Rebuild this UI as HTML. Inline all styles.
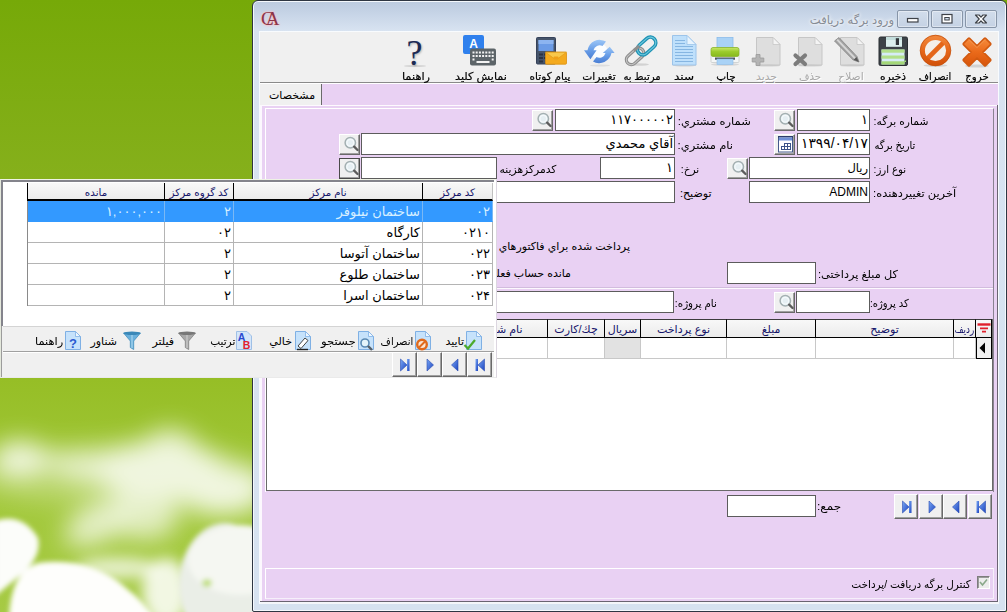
<!DOCTYPE html>
<html lang="fa">
<head>
<meta charset="utf-8">
<title>ورود برگه دريافت</title>
<style>
*{box-sizing:border-box;margin:0;padding:0}
html,body{width:1007px;height:612px;overflow:hidden;background:#86b01c}
body{position:relative;font-family:"Liberation Sans","DejaVu Sans",sans-serif;font-size:11px;color:#000}
.abs{position:absolute}
#bg{position:absolute;left:0;top:0;width:1007px;height:612px}
#win{position:absolute;left:252px;top:0;width:755px;height:612px;border:1px solid #2e3642;border-radius:6px 6px 2px 2px;background:linear-gradient(#bccbdf 0,#c4d2e5 10px,#d8e3f1 30px,#d6e2f0 100%);box-shadow:inset 0 0 0 1px #f4f8fc}
#client{position:absolute;left:259px;top:31px;width:740px;height:573px;background:#e9d1f3;border:1px solid #f8fbfe}
.lbl{position:absolute;white-space:nowrap;direction:rtl;text-align:right;height:21px;line-height:21px;padding-top:1px}
.inp{position:absolute;height:21px;background:#fff;border:1px solid #5c5c5c;font-size:13px;line-height:20px;direction:rtl;text-align:right;padding-right:1px;white-space:nowrap;overflow:hidden}
.sbtn{position:absolute;width:21px;height:21px;background:#f0f0f0;border:1px solid;border-color:#fff #696969 #696969 #fff;box-shadow:inset -1px -1px 0 #a0a0a0}
.sbtn svg{position:absolute;left:2px;top:1px}
.tb{position:absolute;top:66.5px;-webkit-text-stroke:.18px #000;height:18px;line-height:18px;font-size:10.5px;white-space:nowrap;direction:rtl;text-align:center}
.tb.dis{-webkit-text-stroke:0;color:#a8a8a8;text-shadow:1px 1px 0 #fff}
.ico{position:absolute}
.gh{position:absolute;top:0;height:18px;line-height:17px;background:linear-gradient(#f8f8f8,#ebebeb);border-right:1px solid #000;border-bottom:2px solid #000;border-top:1px solid #3c3c3c;text-align:center;color:#14146a;direction:rtl;white-space:nowrap;overflow:hidden}
.nav{position:absolute;width:24px;height:25px;background:#f0f0f0;border:1px solid;border-color:#fff #696969 #696969 #fff;box-shadow:inset -1px -1px 0 #a0a0a0}
.nav svg{position:absolute;left:4px;top:4px}
.pt{position:absolute;top:331px;height:20px;line-height:20px;white-space:nowrap;direction:rtl}
.cap{top:10px;width:32px;height:18px;border:1px solid #8795a8;border-radius:2px;background:linear-gradient(#d2ddeb,#c5d2e4);box-shadow:inset 0 0 0 1px rgba(255,255,255,.4)}
.cap svg{position:absolute;left:0;top:0}
</style>
</head>
<body>
<svg id="bg" viewBox="0 0 1007 612" width="1007" height="612">
<defs>
<linearGradient id="gbg" x1="0" y1="0" x2="0" y2="1">
<stop offset="0" stop-color="#76a908"/>
<stop offset="0.3" stop-color="#86b01c"/>
<stop offset="0.62" stop-color="#96be26"/>
<stop offset="0.8" stop-color="#a2c83a"/>
<stop offset="1" stop-color="#a6ca44"/>
</linearGradient>
<filter id="b20" x="-50%" y="-50%" width="200%" height="200%"><feGaussianBlur stdDeviation="12"/></filter>
<filter id="b8" x="-50%" y="-50%" width="200%" height="200%"><feGaussianBlur stdDeviation="7"/></filter>
<filter id="b3" x="-50%" y="-50%" width="200%" height="200%"><feGaussianBlur stdDeviation="2.5"/></filter>
<linearGradient id="gn" x1="0" y1="0" x2="1" y2="1"><stop offset="0" stop-color="#7aa8f4"/><stop offset="1" stop-color="#1c44c0"/></linearGradient>
</defs>
<rect width="1007" height="612" fill="url(#gbg)"/>
<g filter="url(#b20)" fill="#fff" opacity=".84">
<ellipse cx="120" cy="475" rx="150" ry="32" opacity=".3"/>
<ellipse cx="160" cy="471" rx="66" ry="30" opacity="1"/>
<ellipse cx="170" cy="446" rx="26" ry="17" opacity=".85"/>
<ellipse cx="222" cy="490" rx="46" ry="25" opacity="1"/>
<ellipse cx="100" cy="467" rx="45" ry="16" opacity=".8"/>
<ellipse cx="98" cy="524" rx="36" ry="19" opacity=".85" transform="rotate(-25 98 524)"/>
<ellipse cx="145" cy="515" rx="34" ry="25" opacity=".8"/>
<ellipse cx="20" cy="459" rx="28" ry="18" opacity="1"/>
<ellipse cx="58" cy="462" rx="28" ry="10" opacity=".6"/>
</g>
<g filter="url(#b8)" fill="#fff">
<ellipse cx="166" cy="592" rx="24" ry="34" opacity=".85"/>
<ellipse cx="118" cy="568" rx="42" ry="11" opacity=".7"/>
</g>
<g filter="url(#b3)">
<path d="M-5 521 Q 22 512 38 538 Q 42 556 22 574 L-5 596 Z" fill="#fcfdfa"/>
<ellipse cx="225" cy="585" rx="46" ry="62" fill="#eaeee7"/>
<ellipse cx="240" cy="560" rx="52" ry="35" fill="#f5f7f2"/>
<ellipse cx="207" cy="583" rx="5" ry="4" fill="#b4d860" opacity=".8"/>
<path d="M9 620 Q 10 572 38 563 Q 90 556 126 588 Q 142 600 156 620 Z" fill="#fefefc"/>
</g>
</svg>
<div id="win"></div>
<div class="abs" style="left:261px;top:8px;width:20px;height:22px;font-family:'Liberation Serif',serif;font-size:19px;line-height:22px;color:#8c3448;letter-spacing:-8px;text-shadow:0 0 2px #f6b8c0,0 0 3px #f8c8d0">CA</div>
<div class="abs" style="left:760px;top:10px;width:134px;height:20px;line-height:20px;font-size:11.6px;color:#868c95;direction:rtl;text-align:right;text-shadow:0 0 3px #fff,0 0 5px #fff">ورود برگه دريافت</div>
<div class="abs cap" style="left:897px"><svg width="31" height="17" viewBox="0 0 31 17"><rect x="9.500" y="7.500" width="10.500" height="3.500" fill="#fff" stroke="#3e4248" stroke-width="1.200"/></svg></div>
<div class="abs cap" style="left:931px"><svg width="31" height="17" viewBox="0 0 31 17"><rect x="10" y="3.500" width="10" height="8.500" fill="#fff" stroke="#3e4248" stroke-width="1.200"/><rect x="12.800" y="6.500" width="4.400" height="2.500" fill="#cfdcec" stroke="#3e4248" stroke-width="1"/></svg></div>
<div class="abs cap" style="left:965px"><svg width="31" height="17" viewBox="0 0 31 17"><path d="M9.500 4h3.500l2 2.200 2-2.200h3.500l-3.700 4 3.700 4h-3.500l-2-2.200-2 2.200h-3.500l3.700-4z" fill="#fff" stroke="#3e4248" stroke-width="1.200" stroke-linejoin="round"/></svg></div>
<div id="client"></div>
<div class="abs" style="left:260px;top:32px;width:738px;height:50px;background:#f0f0f0"></div>
<div class="abs" style="left:260px;top:82px;width:738px;height:1px;background:#8a8a8a"></div>
<!-- toolbar icons -->
<svg class="ico" style="left:961px;top:36px" width="32" height="32" viewBox="0 0 32 32">
<defs><linearGradient id="gx" x1="0" y1="0" x2="0" y2="1"><stop offset="0" stop-color="#f58a3c"/><stop offset=".5" stop-color="#ea6a1a"/><stop offset="1" stop-color="#d9560c"/></linearGradient></defs>
<ellipse cx="16" cy="30" rx="12" ry="1.600" fill="#000" opacity=".12"/>
<path d="M8 3 L16 11 L24 3 L29 8 L21 16 L29 24 L24 29 L16 21 L8 29 L3 24 L11 16 L3 8 Z" fill="url(#gx)" stroke="#d25a10" stroke-width="3.200" stroke-linejoin="round"/><path d="M8 3 L16 11 L24 3 L29 8 L21 16 L29 24 L24 29 L16 21 L8 29 L3 24 L11 16 L3 8 Z" fill="url(#gx)"/>
<path d="M8 3.500 L16 11.500 L24 3.500" fill="none" stroke="#f9a560" stroke-width="1" opacity=".7"/>
</svg>
<svg class="ico" style="left:919px;top:34px" width="33" height="33" viewBox="0 0 33 33">
<defs><linearGradient id="gc" x1="0" y1="0" x2="0" y2="1"><stop offset="0" stop-color="#f08438"/><stop offset=".5" stop-color="#e6671a"/><stop offset="1" stop-color="#d4540c"/></linearGradient></defs>
<ellipse cx="16.500" cy="31.500" rx="12" ry="1.500" fill="#000" opacity=".12"/>
<circle cx="16.500" cy="16.500" r="11" fill="#f3eee9"/>
<path d="M8.500 24.500 L24.500 8.500" stroke="#e4661a" stroke-width="4.600"/>
<circle cx="16.500" cy="16.500" r="13" fill="none" stroke="url(#gc)" stroke-width="4.800"/>
<circle cx="16.500" cy="16.500" r="15.300" fill="none" stroke="#c4500e" stroke-width=".8"/>
</svg>
<svg class="ico" style="left:878px;top:36px" width="30" height="31" viewBox="0 0 30 31">
<rect x="1" y="1" width="28.500" height="28.500" rx="1.500" fill="#3d4248" stroke="#2a2e33" stroke-width="1"/>
<rect x="8" y="1" width="16" height="9.800" fill="#dcefee"/>
<rect x="8" y="1" width="16" height="3" fill="#c4dedd"/>
<rect x="17.800" y="2.200" width="3.200" height="6.800" fill="#33373c"/>
<rect x="3.500" y="13.500" width="23" height="15" fill="#d6ecf6"/>
<rect x="3.500" y="13.500" width="23" height="3.200" fill="#b2e08a"/>
<rect x="3.500" y="19.500" width="23" height="3.200" fill="#b2e08a"/>
<rect x="3.500" y="25.300" width="23" height="3.200" fill="#a4d878"/>
<rect x="26.500" y="24.500" width="1.500" height="1.500" fill="#9fe070"/>
</svg>
<div class="tb " style="left:937.4px;width:80px;font-size:10.8px;transform:scaleX(0.944)">خروج</div>
<div class="tb " style="left:895.2px;width:80px;font-size:10.8px;transform:scaleX(0.917)">انصراف</div>
<div class="tb " style="left:853.0px;width:80px;font-size:10.8px;transform:scaleX(0.991)">ذخيره</div>
<div class="tb dis" style="left:811.2px;width:80px;font-size:10.8px;transform:scaleX(0.991)">اصلاح</div>
<div class="tb dis" style="left:769.7px;width:80px;font-size:10.8px;transform:scaleX(0.944)">حذف</div>
<div class="tb dis" style="left:726.5px;width:80px;font-size:10.8px;transform:scaleX(1.000)">جديد</div>
<div class="tb " style="left:685.7px;width:80px;font-size:10.8px;transform:scaleX(0.972)">چاپ</div>
<div class="tb " style="left:644.3px;width:80px;font-size:10.8px;transform:scaleX(1.111)">سند</div>
<div class="tb " style="left:601.5px;width:80px;font-size:10.8px;transform:scaleX(0.926)">مرتبط به</div>
<div class="tb " style="left:558.8px;width:80px;font-size:10.8px;transform:scaleX(0.991)">تغييرات</div>
<div class="tb " style="left:510.4px;width:80px;font-size:10.8px;transform:scaleX(0.972)">پيام كوتاه</div>
<div class="tb " style="left:441.0px;width:80px;font-size:10.8px;transform:scaleX(1.037)">نمايش كليد</div>
<div class="tb " style="left:376.2px;width:80px;font-size:10.8px;transform:scaleX(1.056)">راهنما</div>
<!-- edit (disabled) -->
<svg class="ico" style="left:833px;top:36px" width="34" height="31" viewBox="0 0 34 31">
<path d="M7.500 1.500 H24 L31 8.500 V29 H7.500 Z" fill="#dedede" stroke="#c6c6c6" stroke-width="1"/>
<path d="M24 1.500 V8.500 H31 Z" fill="#f4f4f4" stroke="#c6c6c6" stroke-width=".8"/>
<ellipse cx="19" cy="29.800" rx="12" ry="1" fill="#000" opacity=".08"/>
<path d="M1.500 5 L6 1.500 L24 20.500 L26 26 L20.200 24 Z" fill="#a2a2a2" stroke="#858585" stroke-width=".8"/>
<path d="M4.200 3.600 L22.300 22.600" stroke="#d6d6d6" stroke-width="2"/>
<path d="M23.500 21 L25.800 26 L20.600 23.700 Z" fill="#5a5a5a"/>
</svg>
<!-- delete (disabled) -->
<svg class="ico" style="left:791px;top:36px" width="34" height="31" viewBox="0 0 34 31">
<path d="M7.500 1.500 H24 L31 8.500 V29 H7.500 Z" fill="#dedede" stroke="#c6c6c6" stroke-width="1"/>
<path d="M24 1.500 V8.500 H31 Z" fill="#f4f4f4" stroke="#c6c6c6" stroke-width=".8"/>
<ellipse cx="19" cy="29.800" rx="12" ry="1" fill="#000" opacity=".08"/>
<path d="M4.500 19.500 L14 28 M14 19.500 L4.500 28" stroke="#7c7c7c" stroke-width="4.200" stroke-linecap="round"/>
</svg>
<!-- new (disabled) -->
<svg class="ico" style="left:749px;top:36px" width="34" height="31" viewBox="0 0 34 31">
<path d="M7.500 1.500 H24 L31 8.500 V29 H7.500 Z" fill="#dedede" stroke="#c6c6c6" stroke-width="1"/>
<path d="M24 1.500 V8.500 H31 Z" fill="#f4f4f4" stroke="#c6c6c6" stroke-width=".8"/>
<ellipse cx="19" cy="29.800" rx="12" ry="1" fill="#000" opacity=".08"/>
<path d="M7 18.500 H11 V22 H14.800 V26 H11 V29.500 H7 V26 H3.200 V22 H7 Z" fill="#b4b4b4" stroke="#9a9a9a" stroke-width=".8"/>
</svg>
<!-- print -->
<svg class="ico" style="left:709px;top:36px" width="32" height="31" viewBox="0 0 32 31">
<defs><linearGradient id="gp" x1="0" y1="0" x2="0" y2="1"><stop offset="0" stop-color="#c8e86a"/><stop offset=".45" stop-color="#9ccc2c"/><stop offset="1" stop-color="#86b81c"/></linearGradient></defs>
<ellipse cx="16" cy="28.500" rx="14" ry="1.500" fill="#000" opacity=".1"/>
<rect x="8" y="1.500" width="16" height="11" fill="#a9d2f6" stroke="#8cbcea" stroke-width=".8"/>
<rect x="2" y="19" width="28" height="7.500" rx="1" fill="#f4f6f6" stroke="#c8cccc" stroke-width=".8"/>
<rect x="2" y="11.500" width="28" height="9" rx="2" fill="url(#gp)" stroke="#88b428" stroke-width=".8"/>
<rect x="6" y="21.500" width="20" height="2.200" fill="#4a5258"/>
<rect x="8" y="23" width="16" height="5.500" fill="#a9d2f6" stroke="#8cbcea" stroke-width=".6"/>
</svg>
<!-- document -->
<svg class="ico" style="left:671px;top:34px" width="27" height="33" viewBox="0 0 27 33">
<ellipse cx="13.500" cy="31.300" rx="12" ry="1.200" fill="#000" opacity=".12"/>
<path d="M1.500 1.500 H16 L25 10.500 V31 H1.500 Z" fill="#bfe0fb" stroke="#9cc4ea" stroke-width="1"/>
<path d="M16 1.500 V10.500 H25 Z" fill="#e8f4fe" stroke="#9cc4ea" stroke-width=".8"/>
<g stroke="#86b6e2" stroke-width="1"><path d="M4 6.500H14M4 9.500H14M4 12.500H22M4 15.500H22M4 18.500H22M4 21.500H22M4 24.500H22M4 27.500H22"/></g>
</svg>
<!-- link -->
<svg class="ico" style="left:624px;top:35px" width="34" height="32" viewBox="0 0 34 32">
<ellipse cx="14" cy="29.500" rx="11" ry="1.300" fill="#000" opacity=".12"/>
<g transform="rotate(-42 17 16)">
<rect x="-1" y="11" width="20" height="10" rx="5" fill="none" stroke="#8e8e8e" stroke-width="3.200"/>
<rect x="-1" y="11" width="20" height="10" rx="5" fill="none" stroke="#c4c4c4" stroke-width="1"/>
<rect x="14" y="10.500" width="21" height="11" rx="5.500" fill="none" stroke="#1f92b4" stroke-width="3.600"/>
<rect x="14" y="10.500" width="21" height="11" rx="5.500" fill="none" stroke="#6cc8de" stroke-width="1.100"/>
<path d="M12 11 H19" stroke="#8e8e8e" stroke-width="3.200"/>
</g>
</svg>
<!-- refresh -->
<svg class="ico" style="left:583px;top:36px" width="33" height="31" viewBox="0 0 33 31">
<defs><linearGradient id="gr" x1="0" y1="0" x2="0" y2="1"><stop offset="0" stop-color="#9cc6f6"/><stop offset=".5" stop-color="#6a9fe8"/><stop offset="1" stop-color="#4a7ed4"/></linearGradient></defs>
<ellipse cx="17" cy="29.500" rx="10" ry="1.100" fill="#000" opacity=".08"/>
<ellipse cx="16.500" cy="15.500" rx="8" ry="8" fill="#fbfdff"/>
<path d="M23 5.500 A12.500 12.500 0 0 0 4.500 14.300 L1 14.300 L7.400 23.300 L13.600 14.300 L10.500 14.300 A6.300 6.300 0 0 1 19.500 10 Z" fill="url(#gr)"/>
<path d="M10 25.500 A12.500 12.500 0 0 0 28.500 17 L31.600 17 L26.700 10.800 L19.800 17 L22.500 17 A6.300 6.300 0 0 1 13.500 21 Z" fill="url(#gr)"/>
</svg>
<!-- sms -->
<svg class="ico" style="left:535px;top:36px" width="34" height="30" viewBox="0 0 34 30">
<rect x="1.500" y="1.500" width="19" height="26.500" rx="1" fill="#46546a" stroke="#36425a" stroke-width="1"/>
<rect x="3.500" y="4" width="15" height="11" fill="#6b9be6"/>
<rect x="3.500" y="4" width="15" height="4" fill="#8cb4f0"/>
<g fill="#2c3444"><rect x="4" y="17.500" width="4" height="2"/><rect x="9" y="17.500" width="4" height="2"/><rect x="14" y="17.500" width="4" height="2"/><rect x="4" y="21" width="4" height="2"/><rect x="9" y="21" width="4" height="2"/><rect x="4" y="24.500" width="4" height="2"/></g>
<rect x="10.500" y="16.200" width="21" height="12" rx="1" fill="#f4aa1e" stroke="#dc9010" stroke-width=".8"/>
<path d="M10.500 16.200 L21 24 L31.500 16.200 Z" fill="#f9c84a" stroke="#e09a18" stroke-width=".7"/>
<rect x="18.500" y="20.500" width="5" height="2.500" rx="1" fill="#f0a018"/>
</svg>
<!-- keyboard -->
<svg class="ico" style="left:462px;top:34px" width="36" height="33" viewBox="0 0 36 33">
<path d="M3 1 H20 A2 2 0 0 1 22 3 V22.500 L17.500 20 H3 A2 2 0 0 1 1 18 V3 A2 2 0 0 1 3 1 Z" fill="#2f80ed"/>
<rect x="8" y="14.500" width="26" height="17" rx="2" fill="#5c6468"/>
<g fill="#f2f2f2"><rect x="10.500" y="17.500" width="2" height="2"/><rect x="13.700" y="17.500" width="2" height="2"/><rect x="16.900" y="17.500" width="2" height="2"/><rect x="20.100" y="17.500" width="2" height="2"/><rect x="23.300" y="17.500" width="2" height="2"/><rect x="26.500" y="17.500" width="2" height="2"/><rect x="29.700" y="17.500" width="2" height="2"/>
<rect x="10.500" y="21" width="2" height="2"/><rect x="13.700" y="21" width="2" height="2"/><rect x="16.900" y="21" width="2" height="2"/><rect x="20.100" y="21" width="2" height="2"/><rect x="23.300" y="21" width="2" height="2"/><rect x="26.500" y="21" width="2" height="2"/><rect x="29.700" y="21" width="2" height="2"/>
<rect x="10.500" y="24.500" width="2" height="2"/><rect x="29.700" y="24.500" width="2" height="2"/><rect x="14.500" y="27" width="13" height="2"/></g>
<text x="11.500" y="13.800" font-family="Liberation Sans, sans-serif" font-weight="bold" font-size="12" fill="#fff" text-anchor="middle">A</text>
</svg>
<!-- help -->
<div class="abs" style="left:402.5px;top:35px;width:24px;height:36px;line-height:36px;text-align:center;font-family:'Liberation Serif',serif;font-size:36px;color:#1c2a54;text-shadow:1px 1px 2px rgba(0,0,0,.25)">?</div>
<div class="abs" style="left:404px;top:65px;width:22px;height:2px;border-radius:50%;background:rgba(0,0,0,.12)"></div>
<div class="abs" style="left:260px;top:83px;width:62px;height:22px;background:#f0f0f0;border-right:1px solid #6a6a6a"></div>
<div class="abs" style="left:321px;top:83px;width:1px;height:22px;background:#6a6a6a"></div>
<div class="lbl" style="left:262px;top:84px;width:60px;height:20px;line-height:20px;text-align:center">مشخصات</div>
<div class="abs" style="left:260px;top:104.5px;width:738px;height:1.5px;background:#fdfafe"></div>
<div class="abs" style="left:260px;top:83px;width:738px;height:1px;background:#fff"></div>
<div class="abs" style="left:997px;top:105px;width:1px;height:497px;background:#6a6472"></div>
<div class="abs" style="left:260px;top:105px;width:2px;height:497px;background:#fcf8fe"></div>
<div class="abs" style="left:265px;top:108px;width:729px;height:384px;border-top:1px solid #fff;border-left:1px solid #fff;border-right:1px solid #8a8292"></div>
<div class="abs" style="left:266px;top:288px;width:727px;height:1px;background:#fdf9fe"></div>
<div class="abs" style="left:266px;top:287px;width:727px;height:1px;background:#d2bcde"></div>
<div class="lbl" style="right:79.0px;top:110px;height:21px;line-height:21px;transform:scaleX(0.973);transform-origin:100% 50%">شماره برگه:</div>
<div class="inp" style="left:797px;top:109px;width:73px;height:22px;">۱</div>
<div class="sbtn" style="left:774px;top:110px"><svg width="17" height="17" viewBox="0 0 17 17"><circle cx="8.300" cy="6.700" r="5.200" fill="#e6eff3" stroke="#a4b0b2" stroke-width="1.500"/><circle cx="8.300" cy="6.700" r="3.300" fill="none" stroke="#f4f9fb" stroke-width="1.200"/><path d="M12.200 10.600 L15.500 14" stroke="#5c5c5c" stroke-width="2.300" stroke-linecap="round"/></svg></div>
<div class="lbl" style="right:92.0px;top:134px;height:21px;line-height:21px;transform:scaleX(0.900);transform-origin:100% 50%">تاريخ برگه</div>
<div class="inp" style="left:797px;top:133px;width:73px;height:22px;font-size:13.8px;">۱۳۹۹/۰۴/۱۷</div>
<div class="sbtn" style="left:774px;top:134px"><svg width="17" height="17" viewBox="0 0 17 17"><rect x="1.500" y=".5" width="14" height="15.500" fill="#fff" stroke="#44598c" stroke-width="1"/><rect x="1" y="0" width="15" height="1.500" fill="#2c3c6c"/><rect x="2" y="1.500" width="13" height="3" fill="#6f90d8"/><g fill="none" stroke="#3c5288" stroke-width="1"><rect x="7.500" y="7.500" width="3" height="3"/><rect x="10.500" y="7.500" width="3" height="3"/><rect x="4.500" y="10.500" width="3" height="3"/><rect x="7.500" y="10.500" width="3" height="3"/><rect x="10.500" y="10.500" width="3" height="3"/></g></svg></div>
<div class="lbl" style="right:101.0px;top:158px;height:21px;line-height:21px;transform:scaleX(0.927);transform-origin:100% 50%">نوع ارز:</div>
<div class="inp" style="left:749px;top:157px;width:121px;height:22px;font-size:11.5px;">ريال</div>
<div class="sbtn" style="left:727px;top:158px"><svg width="17" height="17" viewBox="0 0 17 17"><circle cx="8.300" cy="6.700" r="5.200" fill="#e6eff3" stroke="#a4b0b2" stroke-width="1.500"/><circle cx="8.300" cy="6.700" r="3.300" fill="none" stroke="#f4f9fb" stroke-width="1.200"/><path d="M12.200 10.600 L15.500 14" stroke="#5c5c5c" stroke-width="2.300" stroke-linecap="round"/></svg></div>
<div class="lbl" style="right:51.0px;top:182px;height:21px;line-height:21px;transform:scaleX(1.036);transform-origin:100% 50%">آخرين تغييردهنده:</div>
<div class="inp" style="left:749px;top:181px;width:121px;height:22px;font-size:12px;">ADMIN</div>
<div class="lbl" style="right:256.0px;top:110px;height:21px;line-height:21px;transform:scaleX(1.045);transform-origin:100% 50%">شماره مشتري:</div>
<div class="inp" style="left:555px;top:109px;width:120px;height:22px;">۱۱۷۰۰۰۰۰۲</div>
<div class="sbtn" style="left:532px;top:110px"><svg width="17" height="17" viewBox="0 0 17 17"><circle cx="8.300" cy="6.700" r="5.200" fill="#e6eff3" stroke="#a4b0b2" stroke-width="1.500"/><circle cx="8.300" cy="6.700" r="3.300" fill="none" stroke="#f4f9fb" stroke-width="1.200"/><path d="M12.200 10.600 L15.500 14" stroke="#5c5c5c" stroke-width="2.300" stroke-linecap="round"/></svg></div>
<div class="lbl" style="right:273.5px;top:134px;height:21px;line-height:21px;transform:scaleX(1.045);transform-origin:100% 50%">نام مشتري:</div>
<div class="inp" style="left:361px;top:133px;width:314px;height:22px;">آقاي محمدي</div>
<div class="sbtn" style="left:339px;top:134px"><svg width="17" height="17" viewBox="0 0 17 17"><circle cx="8.300" cy="6.700" r="5.200" fill="#e6eff3" stroke="#a4b0b2" stroke-width="1.500"/><circle cx="8.300" cy="6.700" r="3.300" fill="none" stroke="#f4f9fb" stroke-width="1.200"/><path d="M12.200 10.600 L15.500 14" stroke="#5c5c5c" stroke-width="2.300" stroke-linecap="round"/></svg></div>
<div class="lbl" style="right:307.5px;top:158px;height:21px;line-height:21px;transform:scaleX(0.955);transform-origin:100% 50%">نرخ:</div>
<div class="inp" style="left:600px;top:157px;width:75px;height:22px;">۱</div>
<div class="lbl" style="right:451.0px;top:158px;height:21px;line-height:21px;transform:scaleX(0.973);transform-origin:100% 50%">كدمركزهزينه</div>
<div class="inp" style="left:361px;top:157px;width:136px;height:22px;"></div>
<div class="sbtn" style="left:339px;top:158px"><svg width="17" height="17" viewBox="0 0 17 17"><circle cx="8.300" cy="6.700" r="5.200" fill="#e6eff3" stroke="#a4b0b2" stroke-width="1.500"/><circle cx="8.300" cy="6.700" r="3.300" fill="none" stroke="#f4f9fb" stroke-width="1.200"/><path d="M12.200 10.600 L15.500 14" stroke="#5c5c5c" stroke-width="2.300" stroke-linecap="round"/></svg></div>
<div class="abs" style="left:339px;top:158px;width:21px;height:21px;border:1px solid #4a4a4a"></div>
<div class="lbl" style="right:295.5px;top:182px;height:21px;line-height:21px">توضيح:</div>
<div class="inp" style="left:361px;top:181px;width:314px;height:22px;"></div>
<div class="lbl" style="right:377.0px;top:235px;height:21px;line-height:21px">پرداخت شده براي فاكتورهاي</div>
<div class="lbl" style="right:109.0px;top:263px;height:21px;line-height:21px;transform:scaleX(1.027);transform-origin:100% 50%">كل مبلغ پرداختی:</div>
<div class="inp" style="left:727px;top:262px;width:89px;height:22px;"></div>
<div class="lbl" style="right:436.0px;top:262px;height:21px;line-height:21px">مانده حساب فعلي</div>
<div class="lbl" style="right:98.0px;top:292px;height:21px;line-height:21px;transform:scaleX(0.909);transform-origin:100% 50%">كد پروژه:</div>
<div class="inp" style="left:796px;top:291px;width:74px;height:22px;"></div>
<div class="sbtn" style="left:774px;top:292px"><svg width="17" height="17" viewBox="0 0 17 17"><circle cx="8.300" cy="6.700" r="5.200" fill="#e6eff3" stroke="#a4b0b2" stroke-width="1.500"/><circle cx="8.300" cy="6.700" r="3.300" fill="none" stroke="#f4f9fb" stroke-width="1.200"/><path d="M12.200 10.600 L15.500 14" stroke="#5c5c5c" stroke-width="2.300" stroke-linecap="round"/></svg></div>
<div class="lbl" style="right:290.0px;top:292px;height:21px;line-height:21px;transform:scaleX(0.936);transform-origin:100% 50%">نام پروژه:</div>
<div class="inp" style="left:361px;top:291px;width:313px;height:22px;"></div>
<div class="abs" style="left:266px;top:319px;width:727px;height:172px;background:#fff;border:1px solid #6a6a6a;border-top:none"></div>
<div class="gh" style="left:976px;top:319px;width:16px;height:19px;line-height:19px;border-bottom-width:1.5px"></div>
<div class="abs" style="left:976px;top:338px;width:16px;height:21px;background:#fff;border-right:1px solid #c8c8c8;border-bottom:1px solid #c8c8c8"></div>
<div class="gh" style="left:954px;top:319px;width:22px;height:19px;line-height:19px;border-bottom-width:1.5px"><span style="display:inline-block;transform:scaleX(.8);transform-origin:50% 50%;margin:0 -3px">رديف</span></div>
<div class="abs" style="left:954px;top:338px;width:22px;height:21px;background:#fff;border-right:1px solid #c8c8c8;border-bottom:1px solid #c8c8c8"></div>
<div class="gh" style="left:816px;top:319px;width:138px;height:19px;line-height:19px;border-bottom-width:1.5px">توضيح</div>
<div class="abs" style="left:816px;top:338px;width:138px;height:21px;background:#fff;border-right:1px solid #c8c8c8;border-bottom:1px solid #c8c8c8"></div>
<div class="gh" style="left:727px;top:319px;width:89px;height:19px;line-height:19px;border-bottom-width:1.5px">مبلغ</div>
<div class="abs" style="left:727px;top:338px;width:89px;height:21px;background:#fff;border-right:1px solid #c8c8c8;border-bottom:1px solid #c8c8c8"></div>
<div class="gh" style="left:641px;top:319px;width:86px;height:19px;line-height:19px;border-bottom-width:1.5px">نوع پرداخت</div>
<div class="abs" style="left:641px;top:338px;width:86px;height:21px;background:#fff;border-right:1px solid #c8c8c8;border-bottom:1px solid #c8c8c8"></div>
<div class="gh" style="left:605px;top:319px;width:36px;height:19px;line-height:19px;border-bottom-width:1.5px">سريال</div>
<div class="abs" style="left:605px;top:338px;width:36px;height:21px;background:#e2e2e2;border-right:1px solid #c8c8c8;border-bottom:1px solid #c8c8c8"></div>
<div class="gh" style="left:548px;top:319px;width:57px;height:19px;line-height:19px;border-bottom-width:1.5px">چك/كارت</div>
<div class="abs" style="left:548px;top:338px;width:57px;height:21px;background:#fff;border-right:1px solid #c8c8c8;border-bottom:1px solid #c8c8c8"></div>
<div class="gh" style="left:458px;top:319px;width:90px;height:19px;line-height:19px;border-bottom-width:1.5px">نام شعبه</div>
<div class="abs" style="left:458px;top:338px;width:90px;height:21px;background:#fff;border-right:1px solid #c8c8c8;border-bottom:1px solid #c8c8c8"></div>
<div class="gh" style="left:267px;top:319px;width:191px;height:19px;border-bottom-width:1.5px"></div>
<div class="abs" style="left:267px;top:338px;width:191px;height:21px;border-right:1px solid #c8c8c8;border-bottom:1px solid #c8c8c8"></div>
<svg class="abs" style="left:977px;top:321px" width="14" height="14" viewBox="0 0 14 14"><path d="M.5 3.500H13.500" stroke="#e0202c" stroke-width="2.400"/><path d="M3 7.300H11M5 10.700H9" stroke="#e0202c" stroke-width="1.800"/></svg>
<div class="abs" style="left:976px;top:338px;width:16px;height:21px;background:#f0f0f0;border-right:1px solid #000;border-bottom:1px solid #000;border-left:1px solid #000"></div>
<svg class="abs" style="left:978px;top:341px" width="10" height="14" viewBox="0 0 10 14"><path d="M7 1.500 L1.500 7 L7 12.500 Z" fill="#000"/></svg>
<div class="nav" style="left:968px;top:494px"><svg width="16" height="16" viewBox="0 0 16 16"><rect x="3.500" y="2" width="2.500" height="12" fill="url(#gn)"/><path d="M12.500 2 L6 8 L12.500 14 Z" fill="url(#gn)" stroke="#2a4cb0" stroke-width=".6"/></svg></div>
<div class="nav" style="left:943px;top:494px"><svg width="16" height="16" viewBox="0 0 16 16"><path d="M11 2 L4.500 8 L11 14 Z" fill="url(#gn)" stroke="#2a4cb0" stroke-width=".6"/></svg></div>
<div class="nav" style="left:919px;top:494px"><svg width="16" height="16" viewBox="0 0 16 16"><path d="M5 2 L11.500 8 L5 14 Z" fill="url(#gn)" stroke="#2a4cb0" stroke-width=".6"/></svg></div>
<div class="nav" style="left:894px;top:494px"><svg width="16" height="16" viewBox="0 0 16 16"><rect x="10" y="2" width="2.500" height="12" fill="url(#gn)"/><path d="M3.500 2 L10 8 L3.500 14 Z" fill="url(#gn)" stroke="#2a4cb0" stroke-width=".6"/></svg></div>
<div class="lbl" style="right:166px;top:495px;transform:scaleX(1.09);transform-origin:100% 50%">جمع:</div>
<div class="inp" style="left:727px;top:495px;width:89px;height:22px"></div>
<div class="abs" style="left:260px;top:601px;width:738px;height:1px;background:#6a6472"></div>
<div class="abs" style="left:260px;top:602px;width:739px;height:2px;background:#f4f6fa"></div>
<div class="abs" style="left:265px;top:568px;width:729px;height:31px;border:1px solid;border-color:#fff #f6f0fa #f6f0fa #fff"></div>
<div class="lbl" style="right:36px;top:573px;height:20px;line-height:20px;transform:scaleX(.95);transform-origin:100% 50%">كنترل برگه دريافت /پرداخت</div>
<div class="abs" style="left:977px;top:576px;width:13px;height:13px;background:#ececec;border:1px solid;border-color:#7c7c7c #fff #fff #7c7c7c;box-shadow:inset 1px 1px 0 #9a9a9a"></div>
<svg class="abs" style="left:979px;top:578px" width="9" height="9" viewBox="0 0 9 9"><path d="M1 4 L3.500 7 L8 1.500" fill="none" stroke="#8aa88a" stroke-width="1.600"/></svg>
<div class="abs" style="left:0;top:179px;width:497px;height:199px;background:#fff;border:1px solid;border-color:#eef2e4 #dcd6e0 #eaeaea #e4e8dc"></div>
<div class="abs" style="left:1px;top:180px;width:493px;height:146px;border-top:2.5px solid #84848c;border-left:2.5px solid #84848c"></div>
<div class="abs" style="left:1px;top:326px;width:493px;height:51px;background:#f0f0f0"></div>
<div class="abs" style="left:3px;top:326px;width:491px;height:1px;background:#d4d4d4"></div>
<div class="abs" style="left:1px;top:326px;width:1px;height:51px;background:#9c9c9c"></div>
<div class="abs" style="left:3px;top:351px;width:491px;height:1px;background:#a0a0a0"></div>
<div class="abs" style="left:3px;top:352px;width:491px;height:1px;background:#fff"></div>
<div class="abs" style="left:27px;top:183px;width:1px;height:123px;background:#8a8a8a"></div>
<div class="abs" style="left:27px;top:183px;width:1px;height:18px;background:#000"></div>
<div class="gh" style="left:423px;top:183px;width:70px;font-size:10.3px;border-top:none;line-height:20px;border-right-color:#c0c0c0">كد مركز</div>
<div class="abs" style="left:423px;top:201px;width:70px;height:21px;background:#3399ff;color:#d8f0ff;border-right:1px solid #7ab8f4;border-bottom:1px solid #3399ff;font-size:13px;line-height:21px;direction:rtl;text-align:right;padding-right:2px;white-space:nowrap;overflow:hidden">۰۲</div>
<div class="abs" style="left:423px;top:222px;width:70px;height:21px;background:#fff;color:#000;border-right:1px solid #b4b4b4;border-bottom:1px solid #b4b4b4;font-size:13px;line-height:21px;direction:rtl;text-align:right;padding-right:2px;white-space:nowrap;overflow:hidden">۰۲۱۰</div>
<div class="abs" style="left:423px;top:243px;width:70px;height:21px;background:#fff;color:#000;border-right:1px solid #b4b4b4;border-bottom:1px solid #b4b4b4;font-size:13px;line-height:21px;direction:rtl;text-align:right;padding-right:2px;white-space:nowrap;overflow:hidden">۰۲۲</div>
<div class="abs" style="left:423px;top:264px;width:70px;height:21px;background:#fff;color:#000;border-right:1px solid #b4b4b4;border-bottom:1px solid #b4b4b4;font-size:13px;line-height:21px;direction:rtl;text-align:right;padding-right:2px;white-space:nowrap;overflow:hidden">۰۲۳</div>
<div class="abs" style="left:423px;top:285px;width:70px;height:21px;background:#fff;color:#000;border-right:1px solid #b4b4b4;border-bottom:1px solid #b4b4b4;font-size:13px;line-height:21px;direction:rtl;text-align:right;padding-right:2px;white-space:nowrap;overflow:hidden">۰۲۴</div>
<div class="gh" style="left:234px;top:183px;width:189px;font-size:10.3px;border-top:none;line-height:20px">نام مركز</div>
<div class="abs" style="left:234px;top:201px;width:189px;height:21px;background:#3399ff;color:#d8f0ff;border-right:1px solid #7ab8f4;border-bottom:1px solid #3399ff;font-size:13px;line-height:21px;direction:rtl;text-align:right;padding-right:2px;white-space:nowrap;overflow:hidden">ساختمان نيلوفر</div>
<div class="abs" style="left:234px;top:222px;width:189px;height:21px;background:#fff;color:#000;border-right:1px solid #b4b4b4;border-bottom:1px solid #b4b4b4;font-size:13px;line-height:21px;direction:rtl;text-align:right;padding-right:2px;white-space:nowrap;overflow:hidden">كارگاه</div>
<div class="abs" style="left:234px;top:243px;width:189px;height:21px;background:#fff;color:#000;border-right:1px solid #b4b4b4;border-bottom:1px solid #b4b4b4;font-size:13px;line-height:21px;direction:rtl;text-align:right;padding-right:2px;white-space:nowrap;overflow:hidden">ساختمان آتوسا</div>
<div class="abs" style="left:234px;top:264px;width:189px;height:21px;background:#fff;color:#000;border-right:1px solid #b4b4b4;border-bottom:1px solid #b4b4b4;font-size:13px;line-height:21px;direction:rtl;text-align:right;padding-right:2px;white-space:nowrap;overflow:hidden">ساختمان طلوع</div>
<div class="abs" style="left:234px;top:285px;width:189px;height:21px;background:#fff;color:#000;border-right:1px solid #b4b4b4;border-bottom:1px solid #b4b4b4;font-size:13px;line-height:21px;direction:rtl;text-align:right;padding-right:2px;white-space:nowrap;overflow:hidden">ساختمان اسرا</div>
<div class="gh" style="left:165px;top:183px;width:69px;font-size:10.3px;border-top:none;line-height:20px">كد گروه مركز</div>
<div class="abs" style="left:165px;top:201px;width:69px;height:21px;background:#3399ff;color:#d8f0ff;border-right:1px solid #7ab8f4;border-bottom:1px solid #3399ff;font-size:13px;line-height:21px;direction:rtl;text-align:right;padding-right:2px;white-space:nowrap;overflow:hidden">۲</div>
<div class="abs" style="left:165px;top:222px;width:69px;height:21px;background:#fff;color:#000;border-right:1px solid #b4b4b4;border-bottom:1px solid #b4b4b4;font-size:13px;line-height:21px;direction:rtl;text-align:right;padding-right:2px;white-space:nowrap;overflow:hidden">۰۲</div>
<div class="abs" style="left:165px;top:243px;width:69px;height:21px;background:#fff;color:#000;border-right:1px solid #b4b4b4;border-bottom:1px solid #b4b4b4;font-size:13px;line-height:21px;direction:rtl;text-align:right;padding-right:2px;white-space:nowrap;overflow:hidden">۲</div>
<div class="abs" style="left:165px;top:264px;width:69px;height:21px;background:#fff;color:#000;border-right:1px solid #b4b4b4;border-bottom:1px solid #b4b4b4;font-size:13px;line-height:21px;direction:rtl;text-align:right;padding-right:2px;white-space:nowrap;overflow:hidden">۲</div>
<div class="abs" style="left:165px;top:285px;width:69px;height:21px;background:#fff;color:#000;border-right:1px solid #b4b4b4;border-bottom:1px solid #b4b4b4;font-size:13px;line-height:21px;direction:rtl;text-align:right;padding-right:2px;white-space:nowrap;overflow:hidden">۲</div>
<div class="gh" style="left:28px;top:183px;width:137px;font-size:10.3px;border-top:none;line-height:20px">مانده</div>
<div class="abs" style="left:28px;top:201px;width:137px;height:21px;background:#3399ff;color:#d8f0ff;border-right:1px solid #7ab8f4;border-bottom:1px solid #3399ff;font-size:13px;line-height:21px;direction:rtl;text-align:right;padding-right:2px;white-space:nowrap;overflow:hidden">۱,۰۰۰,۰۰۰</div>
<div class="abs" style="left:28px;top:222px;width:137px;height:21px;background:#fff;color:#000;border-right:1px solid #b4b4b4;border-bottom:1px solid #b4b4b4;font-size:13px;line-height:21px;direction:rtl;text-align:right;padding-right:2px;white-space:nowrap;overflow:hidden"></div>
<div class="abs" style="left:28px;top:243px;width:137px;height:21px;background:#fff;color:#000;border-right:1px solid #b4b4b4;border-bottom:1px solid #b4b4b4;font-size:13px;line-height:21px;direction:rtl;text-align:right;padding-right:2px;white-space:nowrap;overflow:hidden"></div>
<div class="abs" style="left:28px;top:264px;width:137px;height:21px;background:#fff;color:#000;border-right:1px solid #b4b4b4;border-bottom:1px solid #b4b4b4;font-size:13px;line-height:21px;direction:rtl;text-align:right;padding-right:2px;white-space:nowrap;overflow:hidden"></div>
<div class="abs" style="left:28px;top:285px;width:137px;height:21px;background:#fff;color:#000;border-right:1px solid #b4b4b4;border-bottom:1px solid #b4b4b4;font-size:13px;line-height:21px;direction:rtl;text-align:right;padding-right:2px;white-space:nowrap;overflow:hidden"></div>
<div class="pt" style="right:543px">تاييد</div>
<div class="abs" style="left:465px;top:331px;height:22px"><svg width="18" height="20" viewBox="0 0 18 20" style="overflow:visible"><path d="M1.500 .5 H11.500 L16.500 5.500 V18.500 H1.500 Z" fill="#c6e2fb" stroke="#7fb0e4" stroke-width="1"/><path d="M11.500 .5 V5.500 H16.500 Z" fill="#eef7ff" stroke="#7fb0e4" stroke-width=".8"/><path d="M-.5 14 L3 17.500 L10 9" fill="none" stroke="#4caa2c" stroke-width="2.200"/></svg></div>
<div class="pt" style="right:594px;transform:scaleX(0.900);transform-origin:100% 50%">انصراف</div>
<div class="abs" style="left:414px;top:331px;height:22px"><svg width="18" height="20" viewBox="0 0 18 20" style="overflow:visible"><path d="M1.500 .5 H11.500 L16.500 5.500 V18.500 H1.500 Z" fill="#c6e2fb" stroke="#7fb0e4" stroke-width="1"/><path d="M11.500 .5 V5.500 H16.500 Z" fill="#eef7ff" stroke="#7fb0e4" stroke-width=".8"/><circle cx="8" cy="13.500" r="4.800" fill="#fbe6d4" stroke="#e06a1c" stroke-width="2.400"/><path d="M5 16.500 L11 10.500" stroke="#e06a1c" stroke-width="2"/></svg></div>
<div class="pt" style="right:651px;transform:scaleX(1.064);transform-origin:100% 50%">جستجو</div>
<div class="abs" style="left:357px;top:331px;height:22px"><svg width="18" height="20" viewBox="0 0 18 20" style="overflow:visible"><path d="M1.500 .5 H11.500 L16.500 5.500 V18.500 H1.500 Z" fill="#c6e2fb" stroke="#7fb0e4" stroke-width="1"/><path d="M11.500 .5 V5.500 H16.500 Z" fill="#eef7ff" stroke="#7fb0e4" stroke-width=".8"/><circle cx="8" cy="12" r="4" fill="#e4f4fb" stroke="#5a8ab4" stroke-width="1.600"/><path d="M11 15 L15 19" stroke="#55606a" stroke-width="2.400"/></svg></div>
<div class="pt" style="right:715px">خالي</div>
<div class="abs" style="left:294px;top:331px;height:22px"><svg width="18" height="20" viewBox="0 0 18 20" style="overflow:visible"><path d="M1.500 .5 H11.500 L16.500 5.500 V18.500 H1.500 Z" fill="#c6e2fb" stroke="#7fb0e4" stroke-width="1"/><path d="M11.500 .5 V5.500 H16.500 Z" fill="#eef7ff" stroke="#7fb0e4" stroke-width=".8"/><path d="M4 15 L11 7 L14 9.500 L7 17.500 Z" fill="#fff" stroke="#444" stroke-width="1"/><path d="M3 18.500 H14" stroke="#222" stroke-width="1.400"/></svg></div>
<div class="pt" style="right:772px;transform:scaleX(0.955);transform-origin:100% 50%">ترتيب</div>
<div class="abs" style="left:236px;top:331px;height:22px"><svg width="16" height="20" viewBox="0 0 16 20"><path d="M.5 .5 H11 L15.500 5 V18.500 H.5 Z" fill="#d4e6fa" stroke="#9fc0e6"/><text x="5.500" y="9.500" font-family="Liberation Sans,sans-serif" font-weight="bold" font-size="10.500" fill="#2a4ad0" text-anchor="middle">A</text><text x="10.500" y="18" font-family="Liberation Sans,sans-serif" font-weight="bold" font-size="10.500" fill="#e02030" text-anchor="middle">B</text></svg></div>
<div class="pt" style="right:833px">فيلتر</div>
<div class="abs" style="left:178px;top:331px;height:22px"><svg width="18" height="19" viewBox="0 0 18 19"><path d="M.5 2 H17.500 L10.700 10 V18.500 L7.300 16.500 V10 Z" fill="#a8a8a8" stroke="#787878" stroke-width=".7"/><path d="M9 4 L9 17" stroke="#dcdcdc" stroke-width="1.200" opacity=".7"/><ellipse cx="9" cy="2.200" rx="8.500" ry="1.700" fill="#787878"/></svg></div>
<div class="pt" style="right:890px">شناور</div>
<div class="abs" style="left:123px;top:331px;height:22px"><svg width="18" height="19" viewBox="0 0 18 19"><path d="M.5 2 H17.500 L10.700 10 V18.500 L7.300 16.500 V10 Z" fill="#6ab0dc" stroke="#3a88b8" stroke-width=".7"/><path d="M9 4 L9 17" stroke="#c4e4f6" stroke-width="1.200" opacity=".7"/><ellipse cx="9" cy="2.200" rx="8.500" ry="1.700" fill="#3a88b8"/></svg></div>
<div class="pt" style="right:944px;transform:scaleX(1.036);transform-origin:100% 50%">راهنما</div>
<div class="abs" style="left:64px;top:331px;height:22px"><svg width="18" height="20" viewBox="0 0 18 20" style="overflow:visible"><path d="M1.500 .5 H11.500 L16.500 5.500 V18.500 H1.500 Z" fill="#c6e2fb" stroke="#7fb0e4" stroke-width="1"/><path d="M11.500 .5 V5.500 H16.500 Z" fill="#eef7ff" stroke="#7fb0e4" stroke-width=".8"/><text x="9" y="16.500" font-family="Liberation Sans,sans-serif" font-weight="bold" font-size="13" fill="#2a5ad0" text-anchor="middle">?</text></svg></div>
<div class="nav" style="left:467px;top:352px;width:25px;height:25px"><svg width="16" height="16" viewBox="0 0 16 16"><rect x="3.500" y="2" width="2.500" height="12" fill="url(#gn)"/><path d="M12.500 2 L6 8 L12.500 14 Z" fill="url(#gn)" stroke="#2a4cb0" stroke-width=".6"/></svg></div>
<div class="nav" style="left:442px;top:352px;width:25px;height:25px"><svg width="16" height="16" viewBox="0 0 16 16"><path d="M11 2 L4.500 8 L11 14 Z" fill="url(#gn)" stroke="#2a4cb0" stroke-width=".6"/></svg></div>
<div class="nav" style="left:417px;top:352px;width:25px;height:25px"><svg width="16" height="16" viewBox="0 0 16 16"><path d="M5 2 L11.500 8 L5 14 Z" fill="url(#gn)" stroke="#2a4cb0" stroke-width=".6"/></svg></div>
<div class="nav" style="left:392px;top:352px;width:25px;height:25px"><svg width="16" height="16" viewBox="0 0 16 16"><rect x="10" y="2" width="2.500" height="12" fill="url(#gn)"/><path d="M3.500 2 L10 8 L3.500 14 Z" fill="url(#gn)" stroke="#2a4cb0" stroke-width=".6"/></svg></div>
</body>
</html>
